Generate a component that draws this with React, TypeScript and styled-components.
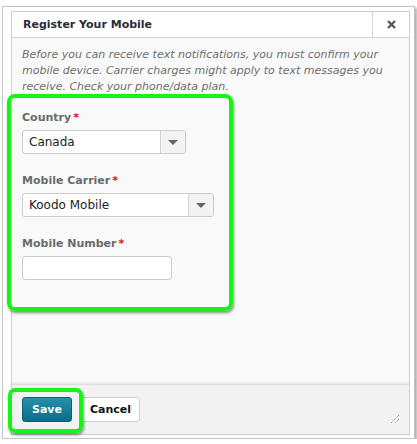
import React from 'react'
import styled, { createGlobalStyle } from 'styled-components'

const GlobalStyle = createGlobalStyle`
  html, body {
    margin: 0;
    padding: 0;
    background: #ffffff;
  }
  body {
    font-family: 'DejaVu Sans', Verdana, sans-serif;
  }
`

const Frame = styled.div`
  position: relative;
  box-sizing: border-box;
  margin: 6px 0 0 2px;
  width: 413px;
  height: 433px;
  padding: 4px 0 0 8px;
  border: 1px solid #c4c4c4;
  background: #ffffff;
  box-shadow: 2px 2px 3px rgba(0, 0, 0, 0.35);
`

const Dialog = styled.div`
  box-sizing: border-box;
  width: 399px;
  height: 424px;
  display: flex;
  flex-direction: column;
  border: 1px solid #cfcfcf;
  background: #f9f9f9;
`

const Header = styled.div`
  display: flex;
  align-items: stretch;
  height: 25px;
  background: #ffffff;
  border-bottom: 1px solid #d6d6d6;
`

const Title = styled.h1`
  flex: 1;
  margin: 0;
  padding-left: 11px;
  display: flex;
  align-items: center;
  font-size: 11px;
  font-weight: bold;
  color: #2b2b33;
`

const CloseButton = styled.div`
  width: 36px;
  border-left: 1px solid #d6d6d6;
  display: flex;
  align-items: center;
  justify-content: center;
`

const Body = styled.div`
  flex: 1;
  padding: 9px 10px 0;
  box-shadow: inset 0 -3px 3px -2px rgba(120, 120, 150, 0.35);
`

const Intro = styled.p`
  margin: 0;
  font-size: 11px;
  font-style: italic;
  line-height: 16px;
  color: #6e6e6e;
`

const FieldGroup = styled.div`
  position: relative;
  margin: -1px 0 0 -15px;
  width: 226px;
  height: 217px;
  padding: 17px 0 0 15px;
  box-sizing: border-box;
`

const Highlight = styled.div`
  position: absolute;
  inset: 0;
  border: 4px solid #16f316;
  border-radius: 8px;
  box-shadow: 1px 2px 3px rgba(0, 0, 0, 0.45);
  pointer-events: none;
`

const Field = styled.div`
  margin-bottom: 20px;
`

const Label = styled.div`
  display: flex;
  align-items: baseline;
  font-size: 11px;
  font-weight: bold;
  color: #6b6b6b;
  margin-bottom: 6px;
`

const Required = styled.span`
  color: #e01010;
  font-weight: bold;
  margin-left: 2px;
`

const Select = styled.div<{ $width: number }>`
  box-sizing: border-box;
  width: ${({ $width }) => $width}px;
  height: 24px;
  display: flex;
  border: 1px solid #cccccc;
  border-radius: 3px;
  background: #ffffff;
  overflow: hidden;
`

const SelectValue = styled.div`
  flex: 1;
  display: flex;
  align-items: center;
  padding-left: 6px;
  font-size: 12px;
  color: #222;
`

const Arrow = styled.div`
  width: 24px;
  border-left: 1px solid #d4d4d4;
  background: #f3f3f3;
  display: flex;
  align-items: center;
  justify-content: center;
  &::after {
    content: '';
    border-left: 5px solid transparent;
    border-right: 5px solid transparent;
    border-top: 5px solid #666;
  }
`

const Input = styled.div`
  box-sizing: border-box;
  width: 150px;
  height: 24px;
  border: 1px solid #cccccc;
  border-radius: 3px;
  background: #ffffff;
`

const Footer = styled.div`
  position: relative;
  height: 49px;
  background: #f2f2f2;
  display: flex;
  align-items: center;
  gap: 9px;
  padding: 0 0 0 10px;
`

const Button = styled.button<{ $primary?: boolean }>`
  box-sizing: border-box;
  height: 25px;
  padding: 0 ${({ $primary }) => ($primary ? 9 : 8)}px;
  border-radius: 3px;
  font-family: 'DejaVu Sans', Verdana, sans-serif;
  font-size: 11px;
  font-weight: bold;
  cursor: pointer;
  color: ${({ $primary }) => ($primary ? '#ffffff' : '#111')};
  background: ${({ $primary }) => ($primary ? 'linear-gradient(#2590aa, #0d6d88)' : '#ffffff')};
  border: 1px solid ${({ $primary }) => ($primary ? '#0b5f77' : '#cfcfcf')};
`

const SaveHighlight = styled.div`
  position: absolute;
  left: -4px;
  top: 3px;
  width: 75px;
  height: 45px;
  box-sizing: border-box;
  border: 4px solid #16f316;
  border-radius: 7px;
  box-shadow: 1px 2px 3px rgba(0, 0, 0, 0.45);
  pointer-events: none;
`

const Grip = styled.svg`
  position: absolute;
  right: 9px;
  bottom: 10px;
`

const App = () => {
  return (
    <>
      <GlobalStyle />
      <Frame>
        <Dialog>
          <Header>
            <Title>Register Your Mobile</Title>
            <CloseButton>
              <svg width="9" height="9" viewBox="0 0 9 9">
                <path d="M1 1 L8 8 M8 1 L1 8" stroke="#555" strokeWidth="2.2" />
              </svg>
            </CloseButton>
          </Header>
          <Body>
            <Intro>
              Before you can receive text notifications, you must confirm your mobile device. Carrier charges might
              apply to text messages you receive. Check your phone/data plan.
            </Intro>
            <FieldGroup>
              <Highlight />
              <Field>
                <Label>
                  Country<Required>*</Required>
                </Label>
                <Select $width={164}>
                  <SelectValue>Canada</SelectValue>
                  <Arrow />
                </Select>
              </Field>
              <Field>
                <Label>
                  Mobile Carrier<Required>*</Required>
                </Label>
                <Select $width={192}>
                  <SelectValue>Koodo Mobile</SelectValue>
                  <Arrow />
                </Select>
              </Field>
              <Field>
                <Label>
                  Mobile Number<Required>*</Required>
                </Label>
                <Input />
              </Field>
            </FieldGroup>
          </Body>
          <Footer>
            <Button $primary>Save</Button>
            <Button>Cancel</Button>
            <SaveHighlight />
            <Grip width="10" height="10" viewBox="0 0 10 10">
              <path d="M9 1 L1 9 M9 5 L5 9" stroke="#777" strokeWidth="1" strokeDasharray="1 1" />
            </Grip>
          </Footer>
        </Dialog>
      </Frame>
    </>
  )
}

export default App
